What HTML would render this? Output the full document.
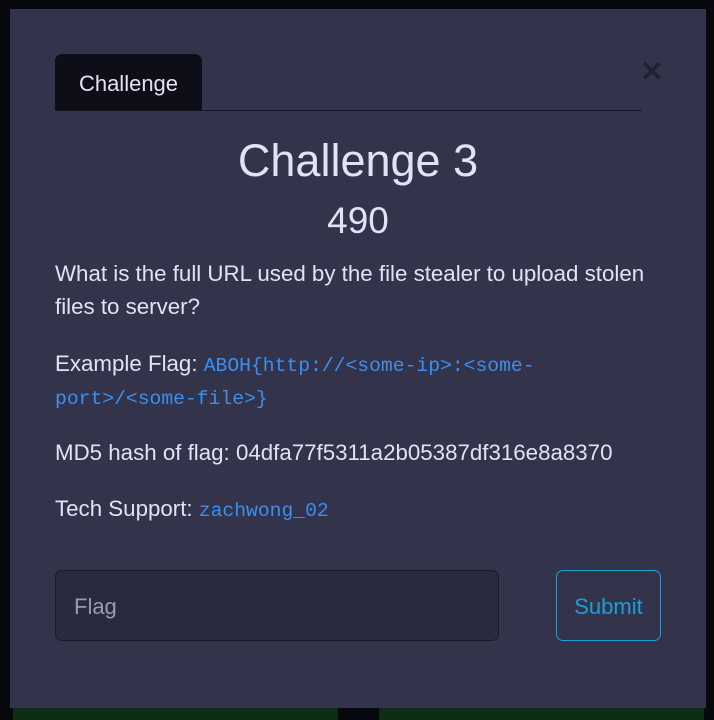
<html><head><style>
body{margin:0;width:714px;height:720px;background:#07080d;position:relative;overflow:hidden;font-family:"Liberation Sans",sans-serif;color:#e2e2f5}
.g{position:absolute;top:708px;height:12px;background:#0f2d15}
.m{position:absolute;left:10px;top:9px;width:696px;height:699px;background:#33334b}
.tab{position:absolute;left:45px;top:45px;width:147px;height:57px;background:#0d0e18;border-radius:7px 7px 0 0;font-size:22px;line-height:59px;text-align:center;color:#e2e2f5}
.line{position:absolute;left:191px;top:101px;width:441px;height:1px;background:#16172a}
.x{position:absolute;left:630px;top:46px;font-size:28px;font-weight:bold;color:#202030}
.h{position:absolute;left:0;width:696px;text-align:center}
p{position:absolute;left:45px;margin:0;font-size:22.3px;line-height:33px;width:610px}
code{font-family:"Liberation Mono",monospace;font-size:19.7px;color:#3b8ff0}
.in{position:absolute;left:45px;top:561px;width:444px;height:71px;border:1px solid #1a1a28;border-radius:7px;background:#292a3e;box-sizing:border-box;font-size:22px;color:#9a9ab0;line-height:71px;padding-left:18px}
.btn{position:absolute;left:546px;top:561px;width:105px;height:71px;border:1px solid #1ba0d8;border-radius:7px;box-sizing:border-box;color:#1ba0d8;font-size:22px;line-height:71px;text-align:center}
</style></head><body>
<div class="g" style="left:13px;width:325px"></div><div class="g" style="left:379px;width:325px"></div>
<div class="m">
<div class="tab">Challenge</div><div class="line"></div><div class="x">✕</div>
<div class="h" style="top:126px;font-size:45px">Challenge 3</div>
<div class="h" style="top:191px;font-size:37px">490</div>
<p style="top:248px">What is the full URL used by the file stealer to upload stolen files to server?</p>
<p style="top:338px">Example Flag: <code>ABOH{http://&lt;some-ip&gt;:&lt;some-port&gt;/&lt;some-file&gt;}</code></p>
<p style="top:427px">MD5 hash of flag: 04dfa77f5311a2b05387df316e8a8370</p>
<p style="top:483px">Tech Support: <code>zachwong_02</code></p>
<div class="in">Flag</div><div class="btn">Submit</div>
</div>
</body></html>
